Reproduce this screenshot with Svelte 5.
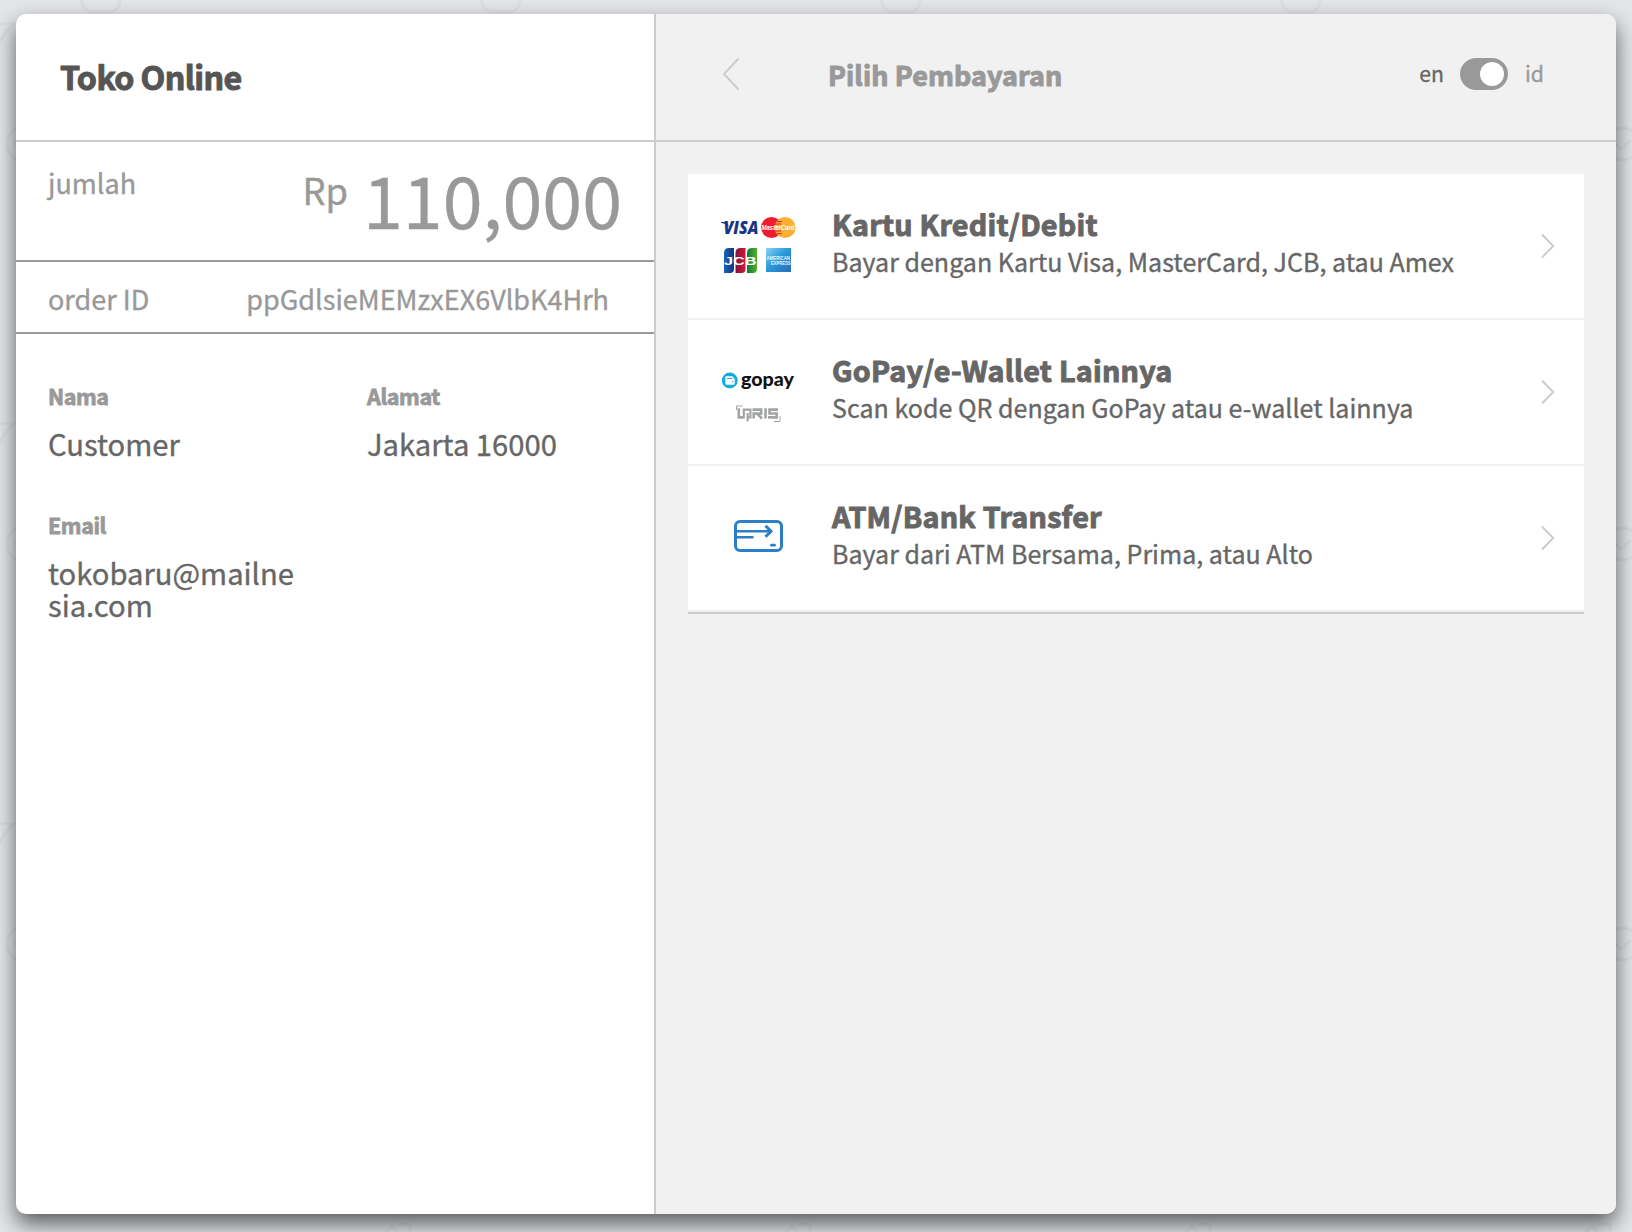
<script>
  const details = [
    { label: 'Nama', value: 'Customer' },
    { label: 'Alamat', value: 'Jakarta 16000' },
    { label: 'Email', value: 'tokobaru@mailnesia.com' },
  ];
  const methods = [
    { icon: 'cards', title: 'Kartu Kredit/Debit', text: 'Bayar dengan Kartu Visa, MasterCard, JCB, atau Amex' },
    { icon: 'gopay', title: 'GoPay/e-Wallet Lainnya', text: 'Scan kode QR dengan GoPay atau e-wallet lainnya' },
    { icon: 'bank', title: 'ATM/Bank Transfer', text: 'Bayar dari ATM Bersama, Prima, atau Alto' },
  ];
  const tiles = [100, 500, 900, 1300];
  const rows = [130, 530, 930];
</script>

<div class="page">
  <svg class="doodles" width="1632" height="1232" fill="none" stroke="#cfd1d1" stroke-width="3">
    {#each tiles as x}
      <rect x={x - 18} y="-18" width="38" height="30" rx="11" />
      <path d="M{x + 285} 1232l8-6 4 5M{x + 298} 1224h12v10" />
    {/each}
    {#each rows as y}
      <circle cx="24" cy={y + 14} r="17" />
      <path d="M-2 {y - 106}q10-1 16 0-10 8-16 22" />
      <circle cx="1623" cy={y + 14} r="16" />
      <path d="M1613 {y + 11}l8 8 10-9" />
    {/each}
  </svg>

  <main class="panel">
    <section class="order">
      <header class="head"><h1>Toko Online</h1></header>
      <div class="amount">
        <span class="key">jumlah</span>
        <span class="price"><span class="cur">Rp</span><span class="num">110,000</span></span>
      </div>
      <div class="orderid">
        <span class="key">order ID</span>
        <span class="code">ppGdlsieMEMzxEX6VlbK4Hrh</span>
      </div>
      <dl class="details">
        {#each details as d}
          <div><dt>{d.label}</dt><dd>{d.value}</dd></div>
        {/each}
      </dl>
    </section>

    <section class="pay">
      <header class="head">
        <svg class="back" width="18" height="34" viewBox="0 0 18 34" fill="none" stroke="#ccc" stroke-width="2"><path d="M16.500 1.500L2 17l14.500 15.500" /></svg>
        <h2>Pilih Pembayaran</h2>
        <div class="lang">
          <span class="en">en</span>
          <span class="switch"><span class="knob"></span></span>
          <span class="id">id</span>
        </div>
      </header>
      <ul class="methods">
        {#each methods as m}
          <li>
            <div class="icon">
              {#if m.icon === 'cards'}
                <svg width="80" height="60" viewBox="0 0 80 60">
                  <defs>
                    <linearGradient id="jb"><stop stop-color="#1565b8" /><stop offset="1" stop-color="#12357c" /></linearGradient>
                    <linearGradient id="jr"><stop stop-color="#7c1440" /><stop offset="1" stop-color="#dc1437" /></linearGradient>
                    <linearGradient id="jg"><stop stop-color="#0c7a37" /><stop offset="1" stop-color="#55b030" /></linearGradient>
                    <linearGradient id="ax" x2="1" y2="1"><stop stop-color="#8fd3f3" /><stop offset=".45" stop-color="#2a9bdb" /><stop offset="1" stop-color="#2a6cb5" /></linearGradient>
                  </defs>
                  <text class="visa" x="3.500" y="17.600" textLength="35" lengthAdjust="spacingAndGlyphs">VISA</text>
                  <path d="M1 6h6l2 5C6 8 4 7 1 7z" fill="#15358a" />
                  <circle cx="51.500" cy="11.500" r="10.500" fill="#ee1c2e" />
                  <circle cx="65" cy="11.500" r="10.500" fill="#fbb034" />
                  <path d="M57 5.500h5M55 8h6M55 15h6M57 17.500h5" stroke="#ee1c2e" stroke-width="1" />
                  <text class="mc" x="41.500" y="14.200" textLength="33" lengthAdjust="spacingAndGlyphs">MasterCard</text>
                  <path d="M9 32h5v21q0 4-4 4H4V37q0-5 5-5z" fill="url(#jb)" />
                  <path d="M20.500 32h5v21q0 4-4 4h-6V37q0-5 5-5z" fill="url(#jr)" />
                  <path d="M32 32h5v21q0 4-4 4h-6V37q0-5 5-5z" fill="url(#jg)" />
                  <text class="jcb" x="4" y="49" textLength="32.500" lengthAdjust="spacingAndGlyphs">JCB</text>
                  <path d="M46 32h25v24H46z" fill="url(#ax)" />
                  <text class="amex" x="46.500" y="44" textLength="23.500" lengthAdjust="spacingAndGlyphs">AMERICAN</text>
                  <text class="amex" x="51" y="49" textLength="19.500" lengthAdjust="spacingAndGlyphs">EXPRESS</text>
                </svg>
              {:else if m.icon === 'gopay'}
                <svg class="low" width="80" height="60" viewBox="0 0 80 60">
                  <circle cx="9.800" cy="14.500" r="7.900" fill="#12aad9" />
                  <path d="M6.300 10.200h5.700q1.500 0 1.500 1.800 1.300.2 1.300 1.500v3.700q0 1.500-1.500 1.500H6.900q-1.500 0-1.500-1.500v-6.500q0-.5.9-.5z" fill="#fff" />
                  <path d="M6.800 12.400h5.700M12 15.800h1.500" stroke="#12aad9" stroke-width="1" />
                  <text class="gopay" x="21" y="19.500" textLength="53" lengthAdjust="spacingAndGlyphs">gopay</text>
                  <g fill="none" stroke="#a3a5a5" stroke-width="2.600">
                    <path d="M16.500 44v-4h6M60 50v5.500h-6" stroke-width="1" />
                    <path d="M18.800 42.300v9.100h4.200" />
                    <path d="M23.800 52.500v-8.900h6.600v7.800h-3.600M27.600 47v8.500" stroke-width="2.200" />
                    <path d="M32.500 43.600h8.700v4h-7.500v5M37.500 48l4.500 4.600M45.500 42.300v10.300M58 43.600h-8.500v3.900h7.200v3.900h-8.700" />
                  </g>
                </svg>
              {:else}
                <svg width="80" height="60" viewBox="0 0 80 60" fill="none" stroke="#2c7fc6" stroke-width="3">
                  <rect x="15.500" y="13.500" width="46" height="29" rx="4.500" />
                  <path d="M15 23.200h34M15 29.200h18.500" stroke-width="2.600" />
                  <path d="M45.500 17.700l5.500 5.500-5.500 5.500" />
                  <path d="M51.500 37.200h3" stroke-linecap="round" stroke-width="2.800" />
                </svg>
              {/if}
            </div>
            <div class="copy"><h3>{m.title}</h3><p>{m.text}</p></div>
            <svg class="next" width="14" height="26" viewBox="0 0 14 26" fill="none" stroke="#ccc" stroke-width="2"><path d="M1 1.500L12.200 13 1 24.500" /></svg>
          </li>
        {/each}
      </ul>
    </section>
  </main>
</div>

<style>
  :global(body) { margin: 0; background: #e3e5e7; overflow: hidden; }
  .page {
    box-sizing: border-box; position: relative; width: 1632px; height: 1232px; padding: 14px 16px 18px;
    overflow: hidden; background: #e3e5e8; color: #666;
    font-family: 'Noto Sans CJK SC', 'Noto Sans', sans-serif;
    -webkit-text-stroke: .35px currentColor;
  }
  svg { -webkit-text-stroke: 0; overflow: visible; }
  .doodles { position: absolute; top: 0; left: 0; opacity: .35; }
  h1, h2, h3, p, ul, dl, dt, dd { margin: 0; padding: 0; }
  .panel {
    position: relative; display: flex; height: 1200px; border-radius: 10px; overflow: hidden;
    background: #fff; box-shadow: 0 10px 21px rgba(0, 0, 0, .6);
  }
  .order { width: 638px; border-right: 2px solid #ccc; }
  .pay { flex: 1; background: #f1f1f1; }
  .head { box-sizing: border-box; display: flex; height: 128px; border-bottom: 2px solid #ccc; }
  h1, h2, h3, dt { -webkit-text-stroke-width: 1px; }
  h1 { padding: 42px 0 0 44px; font-size: 32.2px; line-height: 40px; letter-spacing: -.6px; color: #555; }
  .amount, .orderid { box-sizing: border-box; display: flex; justify-content: space-between; color: #999; border-bottom: 2px solid #999; }
  .amount { height: 120px; padding: 20px 32px 0 32px; }
  .orderid { height: 72px; padding: 17px 45px 0 32px; }
  .key, .code { font-size: 27px; line-height: 40px; }
  .amount .key { padding-top: 1px; }
  .price { display: flex; gap: 15px; }
  .cur { font-size: 36.3px; line-height: 55px; }
  .num { font-size: 71.8px; line-height: 72px; }
  .details { display: grid; grid-template-columns: 319px 270px; row-gap: 33px; padding: 47px 0 0 32px; }
  .details div { min-height: 96px; }
  dt { font-size: 21.5px; font-weight: 700; line-height: 30px; letter-spacing: -.4px; color: #999; -webkit-text-stroke-width: .8px; }
  dd { width: 250px; padding-top: 16px; font-size: 29.2px; line-height: 32px; word-break: break-all; }
  .back { margin: 43px 0 0 66px; }
  h2 { padding: 41px 0 0 88px; font-size: 26.9px; line-height: 40px; letter-spacing: .12px; color: #999; }
  .lang { display: flex; margin: 44px 72px 0 auto; font-size: 21.2px; line-height: 30px; }
  .switch { box-sizing: border-box; display: flex; justify-content: flex-end; width: 48px; height: 32px; margin: 0 17px 0 16px; padding: 4px; border-radius: 16px; background: #999; }
  .knob { width: 24px; height: 24px; border-radius: 50%; background: #fff; }
  .id { color: #999; }
  .methods { margin: 32px; list-style: none; background: #fff; border-bottom: 2px solid #ccc; }
  li { box-sizing: border-box; display: flex; height: 146px; border-bottom: 2px solid #f1f1f1; }
  .icon { box-sizing: content-box; width: 112px; padding: 42px 0 0 32px; }
  .low { margin-top: 4px; }
  .copy { flex: 1; }
  h3 { padding-top: 30px; font-size: 28.7px; line-height: 40px; letter-spacing: .25px; }
  p { margin-top: -1px; font-size: 25px; line-height: 36px; letter-spacing: .02px; }
  .next { margin: 59px 29px 0 0; }
  .visa { font: italic 800 17px 'Open Sans', sans-serif; fill: #15358a; }
  .mc { font: italic 700 7.5px 'Liberation Sans', sans-serif; fill: #fff; }
  .jcb { font: 700 11px 'Liberation Sans', sans-serif; fill: #fff; }
  .amex { font: 700 5px 'Liberation Sans', sans-serif; fill: #e8f6ff; }
  .gopay { font: 900 18px Lato, sans-serif; fill: #111; }
</style>
